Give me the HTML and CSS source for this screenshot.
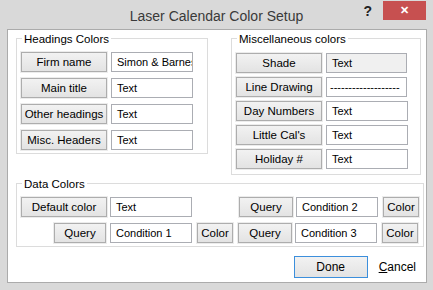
FILE: index.html
```html
<!DOCTYPE html>
<html lang="en">
<head>
  <meta charset="UTF-8" />
  <title>Laser Calendar Color Setup</title>
  <link rel="stylesheet" href="styles.css">
</head>
<body>

<div class="window">
  <div class="titlebar">
    <span></span>
    <span class="title">Laser Calendar Color Setup</span>
    <div class="controls">
      <span class="help">?</span>
      <span class="close">&#x2715;</span>
    </div>
  </div>

  <div class="client">
    <div class="top-row">
      <div class="group headings">
        <span class="group-title">Headings Colors</span>
        <div class="rows rows-wide">
          <div class="row"><button class="btn wide">Firm name</button><div class="field">Simon &amp; Barnes</div></div>
          <div class="row"><button class="btn wide">Main title</button><div class="field">Text</div></div>
          <div class="row"><button class="btn wide">Other headings</button><div class="field">Text</div></div>
          <div class="row"><button class="btn wide">Misc. Headers</button><div class="field">Text</div></div>
        </div>
      </div>

      <div class="group misc">
        <span class="group-title">Miscellaneous colors</span>
        <div class="rows">
          <div class="row"><button class="btn wide">Shade</button><div class="field field-grey">Text</div></div>
          <div class="row"><button class="btn wide">Line Drawing</button><div class="field dashes">-------------------</div></div>
          <div class="row"><button class="btn wide">Day Numbers</button><div class="field">Text</div></div>
          <div class="row"><button class="btn wide">Little Cal's</button><div class="field">Text</div></div>
          <div class="row"><button class="btn wide">Holiday #</button><div class="field">Text</div></div>
        </div>
      </div>
    </div>

    <div class="group data">
      <span class="group-title">Data Colors</span>
      <div class="data-row">
        <button class="btn wide">Default color</button>
        <div class="field">Text</div>
        <button class="btn query push">Query</button>
        <div class="field">Condition 2</div>
        <button class="btn color">Color</button>
      </div>
      <div class="data-row">
        <button class="btn query indent">Query</button>
        <div class="field">Condition 1</div>
        <button class="btn color">Color</button>
        <button class="btn query after-color">Query</button>
        <div class="field">Condition 3</div>
        <button class="btn color">Color</button>
      </div>
    </div>

    <div class="footer">
      <button class="btn done">Done</button>
      <span class="cancel"><u>C</u>ancel</span>
    </div>
  </div>
</div>

</body>
</html>
```

FILE: styles.css
```css
* {
  box-sizing: border-box;
}

body {
  margin: 0;
  font-family: 'Liberation Sans', Arial, sans-serif;
  font-size: 11px;
  color: #000;
}

.window {
  width: 433px;
  height: 290px;
  background: #d9d9d9;
  overflow: hidden;
}

.titlebar {
  height: 29px;
  display: grid;
  grid-template-columns: 1fr auto 1fr;
  align-items: start;
}

.title {
  font-size: 14px;
  color: #3a3a3a;
  margin-top: 8px;
}

.controls {
  display: flex;
  justify-content: flex-end;
  align-items: flex-start;
}

.help {
  font-weight: bold;
  font-size: 14px;
  color: #222;
  margin: 3px 11px 0 0;
}

.close {
  width: 43px;
  height: 19px;
  margin: 1px 7px 0 0;
  background: #c75050;
  color: #fff;
  font-size: 11px;
  font-weight: bold;
  display: flex;
  align-items: center;
  justify-content: center;
}

.client {
  margin: 0 6px 0 7px;
  height: 254px;
  background: #fff;
  border: 1px solid #ababab;
  padding: 8px 0 0 8px;
}

.top-row {
  display: flex;
  align-items: flex-start;
}

.group {
  border: 1px solid #dcdcdc;
}

.group-title {
  display: table;
  background: #fff;
  padding: 0 2px;
  margin: -7px 0 0 5px;
  font-size: 11.5px;
  line-height: 14px;
}

.headings {
  width: 192px;
  height: 116px;
}

.misc {
  width: 190px;
  height: 137px;
  margin-left: 23px;
}

.rows {
  display: flex;
  flex-direction: column;
  gap: 4px;
  padding: 7px 0 0 4px;
}

.rows-wide {
  gap: 6px;
  padding-top: 6px;
}

.row {
  display: flex;
  gap: 4px;
}

.btn {
  height: 20px;
  padding: 0;
  font-family: inherit;
  font-size: 11.5px;
  color: #000;
  border: 1px solid #adadad;
  background: linear-gradient(#f2f2f2, #e3e3e3);
  box-shadow: 0 0 0 1px #ececec;
}

.wide {
  width: 86px;
}

.field {
  width: 82px;
  height: 20px;
  border: 1px solid #abadb3;
  background: #fff;
  padding: 0 0 0 5px;
  line-height: 18px;
  font-size: 11px;
  white-space: nowrap;
  overflow: hidden;
}

.field-grey {
  background: #f0f0f0;
  width: 81px;
}

.dashes {
  width: 81px;
  padding-left: 3px;
}

.data {
  width: 408px;
  height: 64px;
  margin-top: 8px;
}

.data-row {
  display: flex;
  align-items: center;
  padding-left: 4px;
  margin-top: 6px;
}

.data-row .field {
  margin-left: 3px;
}

.data-row .color {
  margin-left: 5px;
}

.query {
  width: 54px;
}

.query.push {
  margin-left: 47px;
}

.query.indent {
  width: 52px;
  margin-left: 33px;
}

.query.after-color {
  margin-left: 5px;
}

.data-row .indent + .field {
  margin-left: 4px;
}

.color {
  width: 36px;
}

.footer {
  display: flex;
  align-items: center;
  justify-content: flex-end;
  padding: 9px 10px 0 0;
}

.done {
  width: 74px;
  height: 22px;
  border-color: #3c8fdc;
  box-shadow: none;
  font-size: 12px;
}

.cancel {
  margin-left: 11px;
  font-size: 12px;
}
```
